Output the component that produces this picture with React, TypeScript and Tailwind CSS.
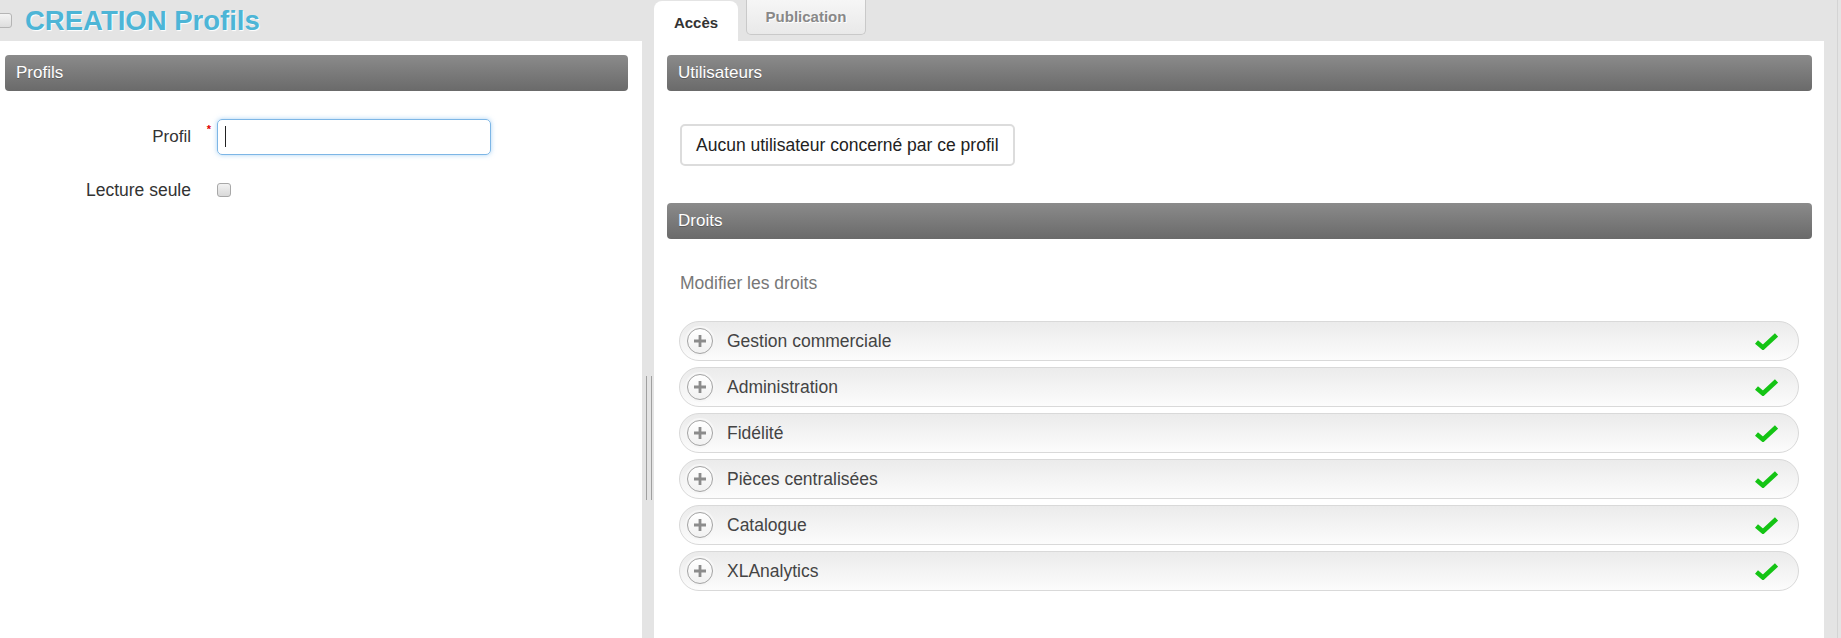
import React from "react";

const droits = [
    "Gestion commerciale",
    "Administration",
    "Fidélité",
    "Pièces centralisées",
    "Catalogue",
    "XLAnalytics",
];

function SectionHeader({ title }: { title: string }) {
    return (
        <div className="flex h-[36px] items-center rounded-[4px] bg-gradient-to-b from-[#8b8b8b] to-[#6a6a6a] px-[11px] text-[17px] text-white [text-shadow:0_1px_0_#5a5a5a]">
            {title}
        </div>
    );
}

function DroitRow({ label }: { label: string }) {
    return (
        <div className="flex h-[40px] items-center rounded-full border border-[#d9d9d9] bg-gradient-to-b from-[#ebebeb] to-[#fcfcfc] pl-[7px] pr-[20px]">
            {/* bouton + */}
            <div className="flex h-[26px] w-[26px] items-center justify-center rounded-full border border-[#a3a3a3] bg-gradient-to-b from-[#ffffff] to-[#f1f1f1] shadow-[0_0_0_2px_#f6f6f6]">
                <svg width="14" height="14" viewBox="0 0 14 14">
                    <path d="M7 1v12M1 7h12" stroke="#8c8c8c" strokeWidth="2.8" />
                </svg>
            </div>
            <span className="ml-[14px] text-[17.5px] text-[#444]">{label}</span>
            <svg className="ml-auto" width="23" height="17" viewBox="0 0 23 17">
                <path d="M1.5 9 L8 14.5 L21.5 2" fill="none" stroke="#14c414" strokeWidth="4.6" />
            </svg>
        </div>
    );
}

export default function App() {
    return (
        <div className="flex h-[638px] w-full overflow-hidden bg-[#e4e4e4] font-['Liberation_Sans',Arial,sans-serif]">
            {/* colonne gauche */}
            <div className="flex w-[642px] shrink-0 flex-col">
                <div className="flex h-[41px] items-center gap-[13px]">
                    <div className="-ml-[3px] h-[15px] w-[15px] rounded-[3px] border border-[#b5b5b5] bg-gradient-to-b from-[#f4f4f4] to-[#dedede]" />
                    <h1 className="text-[27.5px] font-bold leading-none text-[#4db5d6] [text-shadow:1px_1px_1px_#ffffff]">
                        CREATION Profils
                    </h1>
                </div>
                <div className="flex-1 bg-white pl-[5px] pr-[14px] pt-[14px]">
                    <SectionHeader title="Profils" />

                    {/* formulaire */}
                    <div className="mt-[28px] flex items-center">
                        <label className="w-[186px] text-right text-[17px] text-[#333]">Profil</label>
                        <div className="flex h-[36px] w-[26px] justify-center self-start pt-[5px] pl-[10px]">
                            <span className="text-[11px] leading-none font-bold text-[#e00000]">*</span>
                        </div>
                        <div className="relative">
                            <input
                                autoFocus
                                className="h-[36px] w-[274px] rounded-[5px] border border-[#7db6e6] pl-[8px] text-[17px] text-[#333] shadow-[0_0_5px_rgba(102,175,233,0.55)] outline-none"
                            />
                            <span className="absolute left-[8px] top-[7px] h-[21px] w-px bg-[#222]" />
                        </div>
                    </div>
                    <div className="mt-[25px] flex h-[20px] items-center">
                        <label className="w-[186px] text-right text-[17.5px] text-[#333]">Lecture seule</label>
                        <div className="ml-[26px] h-[14px] w-[14px] rounded-[3px] border border-[#a8a8a8] bg-gradient-to-b from-[#f2f2f2] to-[#d9d9d9]" />
                    </div>
                </div>
            </div>

            {/* séparateur */}
            <div className="flex w-[12px] shrink-0 gap-[4px] pl-[4px] pt-[376px]">
                <div className="h-[124px] w-px bg-[#a0a0a0]" />
                <div className="h-[124px] w-px bg-[#a0a0a0]" />
            </div>

            {/* colonne droite */}
            <div className="flex w-[1170px] shrink-0 flex-col">
                <div className="flex h-[41px] items-start gap-[8px]">
                    <div className="mt-[1px] flex h-[40px] w-[84px] items-center justify-center rounded-t-[8px] bg-white pt-[4px] text-[15px] font-bold text-[#333]">
                        Accès
                    </div>
                    <div className="flex h-[35px] w-[120px] items-center justify-center rounded-b-[5px] border border-t-0 border-[#c9c9c9] bg-gradient-to-b from-[#f6f6f6] to-[#e9e9e9] text-[15px] font-bold text-[#888] [text-shadow:1px_1px_0_#ffffff]">
                        Publication
                    </div>
                </div>
                <div className="flex-1 bg-white pl-[13px] pr-[12px] pt-[14px]">
                    <SectionHeader title="Utilisateurs" />
                    <div className="ml-[13px] mt-[33px] inline-flex h-[42px] items-center rounded-[5px] border-2 border-[#dcdcdc] px-[14px] text-[17.5px] text-[#222]">
                        Aucun utilisateur concerné par ce profil
                    </div>
                    <div className="mt-[37px]">
                        <SectionHeader title="Droits" />
                    </div>
                    <p className="ml-[13px] mt-[34px] text-[17.5px] leading-[20px] text-[#777]">Modifier les droits</p>
                    <div className="ml-[12px] mr-[13px] mt-[28px] flex flex-col gap-[6px]">
                        {droits.map(d => (
                            <DroitRow key={d} label={d} />
                        ))}
                    </div>
                </div>
            </div>

            {/* bord droit */}
            <div className="flex w-[17px] shrink-0">
                <div className="w-[13px]" />
                <div className="w-px bg-[#d4d4d4]" />
            </div>
        </div>
    );
}
